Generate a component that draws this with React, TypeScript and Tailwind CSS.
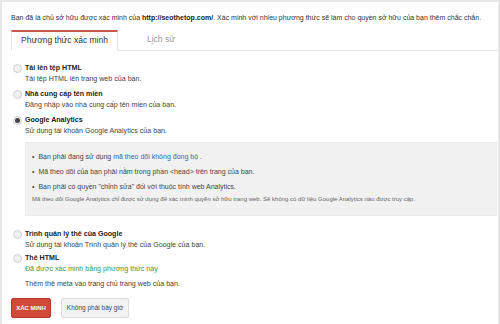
import React from 'react';

const Radio = ({ checked }: { checked?: boolean }) => (
  <span className="mt-[1px] flex h-[9px] w-[9px] shrink-0 items-center justify-center rounded-full border border-[#cfcfcf] bg-[#f1f1f1]">
    {checked && <span className="h-[5px] w-[5px] rounded-full bg-[#444]" />}
  </span>
);

const Option = ({
  title,
  desc,
  checked,
  green,
}: {
  title: string;
  desc: string;
  checked?: boolean;
  green?: boolean;
}) => (
  <div className="flex gap-[3px]">
    <Radio checked={checked} />
    <div className="leading-[11px]">
      <div className="font-bold text-[#222]">{title}</div>
      <div className={green ? 'text-[#3a9a3a]' : 'text-[#444]'}>{desc}</div>
    </div>
  </div>
);

export default function App() {
  return (
    <div
      className="h-[324px] w-[500px] overflow-hidden bg-white text-[7.1px] text-[#333]"
      style={{ fontFamily: '"Liberation Sans", Arial, sans-serif' }}
    >
      <div className="h-full border-l-2 border-r-2 border-t-2 border-[#e8e8e8] pl-[9px]">
        {/* intro */}
        <p className="whitespace-nowrap pt-[11px] text-[7px] text-[#333]">
          Bạn đã là chủ sở hữu được xác minh của <b className="text-[#222]">http://seothetop.com/</b>. Xác minh với nhiều phương
          thức sẽ làm cho quyền sở hữu của bạn thêm chắc chắn.
        </p>

        {/* tabs */}
        <div className="mt-[5px] flex items-end border-b border-[#e5e5e5]">
          <div className="-mb-px flex h-[21px] w-[107px] items-center justify-center border-x border-b border-t-2 border-x-[#e5e5e5] border-b-white border-t-[#c9584c] bg-white text-[8.5px] text-[#333]">
            Phương thức xác minh
          </div>
          <div className="flex h-[21px] items-center pl-[29px] text-[8.5px] text-[#999]">Lịch sử</div>
        </div>

        <div className="mt-[12px] flex flex-col gap-[4px] pl-[2px]">
          <Option title="Tải lên tệp HTML" desc="Tải tệp HTML lên trang web của bạn." />
          <Option title="Nhà cung cấp tên miền" desc="Đăng nhập vào nhà cung cấp tên miền của bạn." />
          <Option title="Google Analytics" desc="Sử dụng tài khoản Google Analytics của bạn." checked />
        </div>

        {/* details box */}
        <div className="ml-[14px] mr-[1px] mt-[5px] border border-[#ececec] bg-[#f1f1f1] pb-[11px] pl-[6px] pt-[9px] text-[7px] text-[#444]">
          <ul className="flex flex-col gap-[5px] leading-[10px]">
            <li className="flex gap-[4px]">
              <span>•</span>
              <span>
                Bạn phải đang sử dụng <span className="text-[#3b5fa8]">mã theo dõi không đồng bộ</span> .
              </span>
            </li>
            <li className="flex gap-[4px]">
              <span>•</span>
              <span>Mã theo dõi của bạn phải nằm trong phần &lt;head&gt; trên trang của bạn.</span>
            </li>
            <li className="flex gap-[4px]">
              <span>•</span>
              <span>Bạn phải có quyền "chỉnh sửa" đối với thuộc tính web Analytics.</span>
            </li>
          </ul>
          <p className="mt-[3px] whitespace-nowrap text-[6px] text-[#666]">
            Mã theo dõi Google Analytics chỉ được sử dụng để xác minh quyền sở hữu trang web. Sẽ không có dữ liệu Google
            Analytics nào được truy cập.
          </p>
        </div>

        <div className="mt-[13px] flex flex-col gap-[2px] pl-[2px]">
          <Option title="Trình quản lý thẻ của Google" desc="Sử dụng tài khoản Trình quản lý thẻ của Google của bạn." />
          <Option title="Thẻ HTML" desc="Đã được xác minh bằng phương thức này" green />
        </div>
        <p className="mt-[4px] pl-[14px] text-[#444]">Thêm thẻ meta vào trang chủ trang web của bạn.</p>

        {/* buttons */}
        <div className="mt-[9px] flex gap-[10px]">
          <button className="h-[20px] w-[40px] rounded-[2px] border border-[#b83a2e] bg-[#d14836] text-[6px] font-bold text-white">
            XÁC MINH
          </button>
          <button className="h-[20px] w-[68px] rounded-[2px] border border-[#dcdcdc] bg-[#f3f3f3] text-[6.5px] text-[#444]">
            Không phải bây giờ
          </button>
        </div>
      </div>
    </div>
  );
}
